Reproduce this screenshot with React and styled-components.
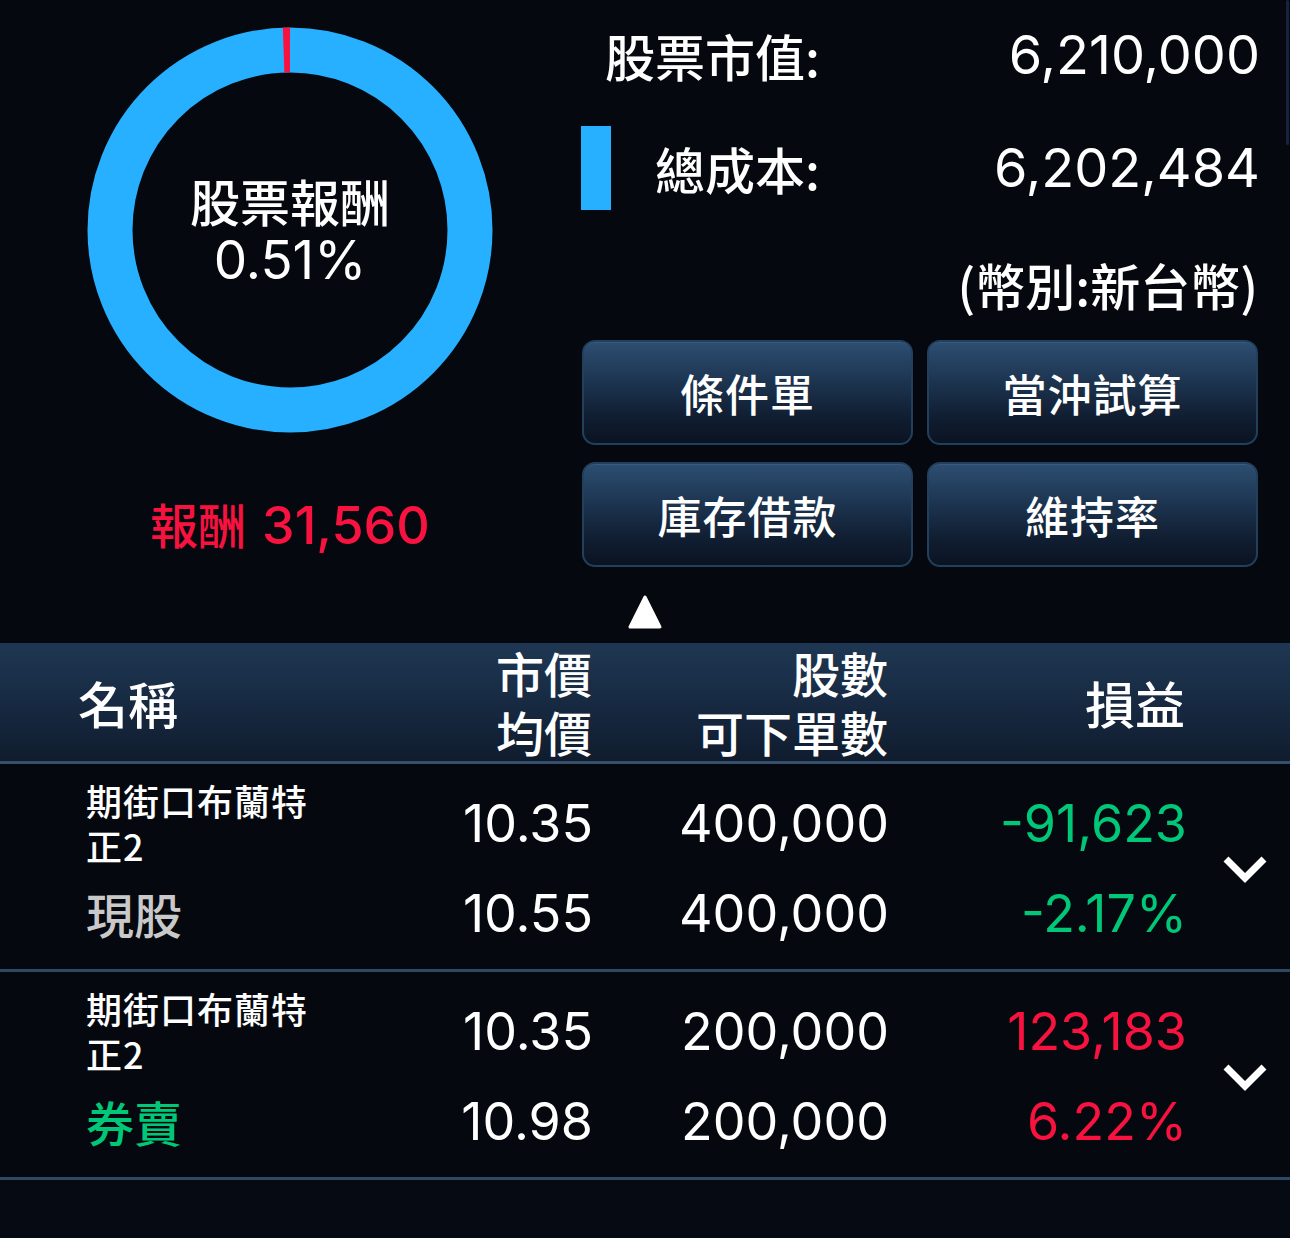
import React from "react";
import styled, { createGlobalStyle } from "styled-components";

const GlobalStyle = createGlobalStyle`
  html, body { margin: 0; padding: 0; background: #05080e; }
  body {
    font-family: Inter, "Noto Sans CJK TC", sans-serif;
    color: #ffffff;
    -webkit-font-smoothing: antialiased;
  }
  * { box-sizing: border-box; }
`;

const RED = "#f8123f";
const GREEN = "#00c878";
const BLUE = "#27b0ff";
const COLS = "420px 173px 296px 298px 1fr";

const Page = styled.div`
  position: relative;
  width: 1290px;
  min-height: 1238px;
  display: flex;
  flex-direction: column;
  background: #05080e;
  overflow: hidden;
`;

const ScrollIndicator = styled.div`
  position: absolute;
  top: 0;
  right: 1px;
  width: 3px;
  height: 145px;
  border-radius: 2px;
  background: rgba(38, 58, 98, 0.55);
`;

const Top = styled.section`
  display: flex;
  align-items: flex-start;
`;

const LeftCol = styled.div`
  width: 580px;
  display: flex;
  flex-direction: column;
  align-items: center;
  padding-top: 27px;
`;

const Donut = styled.div`
  position: relative;
  width: 406px;
  height: 406px;
`;

const DonutLabel = styled.div`
  position: absolute;
  inset: 0;
  display: flex;
  flex-direction: column;
  align-items: center;
  justify-content: center;
`;

const DonutTitle = styled.div`
  font-family: "Noto Sans CJK TC", sans-serif;
  font-size: 50px;
  font-weight: 500;
  line-height: 60px;
`;

const DonutValue = styled.div`
  font-size: 53px;
  font-weight: 400;
  line-height: 60px;
`;

const Reward = styled.div`
  margin-top: 60px;
  line-height: 60px;
  color: ${RED};
  white-space: nowrap;
`;

const RewardLabel = styled.span`
  font-family: "Noto Sans CJK TC", sans-serif;
  font-size: 48px;
  font-weight: 500;
  margin-right: 16px;
`;

const RewardValue = styled.span`
  font-size: 52px;
  font-weight: 500;
`;

const RightCol = styled.div`
  flex: 1;
  padding: 25px 30px 0 0;
  display: flex;
  flex-direction: column;
`;

const InfoRow = styled.div`
  display: grid;
  grid-template-columns: 32px 208px 1fr;
  align-items: center;
  height: ${(p) => p.$h}px;
  margin-top: ${(p) => p.$mt || 0}px;
`;

const LegendBar = styled.div`
  width: 30px;
  height: 84px;
  margin-left: 1px;
  background: ${BLUE};
`;

const InfoLabel = styled.div`
  grid-column: 2;
  justify-self: end;
  width: max-content;
  font-family: "Noto Sans CJK TC", sans-serif;
  font-size: 50px;
  font-weight: 500;
  line-height: 60px;
  text-align: right;
  white-space: nowrap;
`;

const InfoValue = styled.div`
  grid-column: 3;
  font-size: 54px;
  font-weight: 400;
  line-height: 60px;
  text-align: right;
  white-space: nowrap;
`;

const Currency = styled.div`
  margin-top: 44px;
  padding-right: 2px;
  font-family: "Noto Sans CJK TC", sans-serif;
  font-size: 50px;
  font-weight: 500;
  line-height: 60px;
  text-align: right;
`;

const ButtonGrid = styled.div`
  margin-top: 26px;
  padding: 0 2px 0 2px;
  display: grid;
  grid-template-columns: 1fr 1fr;
  grid-auto-rows: 105px;
  gap: 17px 14px;
`;

const ActionButton = styled.button`
  display: flex;
  align-items: center;
  justify-content: center;
  border: 2px solid #21405e;
  border-radius: 13px;
  background: linear-gradient(
    to bottom,
    #2d4e71 0%,
    #1d3551 38%,
    #111f33 72%,
    #0b1321 100%
  );
  box-shadow: inset 0 1px 0 rgba(90, 130, 170, 0.25);
  color: #ffffff;
  font-family: "Noto Sans CJK TC", sans-serif;
  font-size: 44px;
  font-weight: 500;
  letter-spacing: 1px;
  cursor: pointer;
  padding: 0;
`;

const ArrowRow = styled.div`
  height: 75px;
  padding-top: 26px;
  display: flex;
  justify-content: center;
`;

const Header = styled.div`
  display: grid;
  grid-template-columns: ${COLS};
  height: 121px;
  background: linear-gradient(to bottom, #1f3753 0%, #172a42 50%, #101c2e 100%);
  border-bottom: 3px solid #34506a;
`;

const HeaderCell = styled.div`
  display: flex;
  flex-direction: column;
  justify-content: center;
  align-items: ${(p) => (p.$left ? "flex-start" : "flex-end")};
  padding-left: ${(p) => (p.$left ? "78px" : "0")};
  padding-right: ${(p) => p.$pr || 0}px;
  font-family: "Noto Sans CJK TC", sans-serif;
  font-size: ${(p) => p.$size || 48}px;
  font-weight: 500;
  line-height: 59px;
  white-space: nowrap;
`;

const Row = styled.div`
  display: grid;
  grid-template-columns: ${COLS};
  grid-template-rows: 90px 90px;
  padding: 14px 0 11px;
  border-bottom: 3px solid #2f4962;
`;

const NameCell = styled.div`
  grid-column: 1;
  grid-row: 1;
  padding-left: 86px;
  display: flex;
  align-items: center;
`;

const NameText = styled.div`
  max-width: 240px;
  font-family: "Noto Sans CJK TC", sans-serif;
  font-size: 36px;
  font-weight: 500;
  line-height: 45px;
  letter-spacing: 1px;
`;

const TypeCell = styled.div`
  grid-column: 1;
  grid-row: 2;
  padding-left: 86px;
  display: flex;
  align-items: center;
  font-family: "Noto Sans CJK TC", sans-serif;
  font-size: 48px;
  font-weight: 500;
  color: ${(p) => p.$color};
`;

const Num = styled.div`
  grid-column: ${(p) => p.$col};
  grid-row: ${(p) => p.$row};
  display: flex;
  align-items: center;
  justify-content: flex-end;
  font-size: 52px;
  font-weight: 400;
  color: ${(p) => p.$color || "#ffffff"};
  white-space: nowrap;
`;

const ChevronCell = styled.div`
  grid-column: 5;
  grid-row: 1 / 3;
  display: flex;
  align-items: center;
  justify-content: flex-end;
  padding-right: 22px;
  padding-top: 2px;
`;

const Filler = styled.div`
  flex: 1;
  background: #060a13;
`;

function DonutChart() {
  return (
    <svg width="406" height="406" viewBox="0 0 406 406">
      <circle cx="203" cy="203" r="180" fill="none" stroke={BLUE} strokeWidth="45" />
      <path
        d="M 196.6 23.1 A 180 180 0 0 1 203 23"
        fill="none"
        stroke={RED}
        strokeWidth="45"
      />
    </svg>
  );
}

function Triangle() {
  return (
    <svg width="36" height="36" viewBox="0 0 36 36">
      <polygon
        points="18,3 33,33 3,33"
        fill="#ffffff"
        stroke="#ffffff"
        strokeWidth="3"
        strokeLinejoin="round"
      />
    </svg>
  );
}

function Chevron() {
  return (
    <svg width="46" height="30" viewBox="0 0 46 30">
      <polyline
        points="4,5 23,24 42,5"
        fill="none"
        stroke="#ffffff"
        strokeWidth="7"
        strokeLinejoin="miter"
      />
    </svg>
  );
}

const rows = [
  {
    name: "期街口布蘭特正2",
    type: "現股",
    typeColor: "#c9c9c9",
    price: "10.35",
    avg: "10.55",
    qty: "400,000",
    avail: "400,000",
    pl: "-91,623",
    pct: "-2.17%",
    plColor: GREEN,
  },
  {
    name: "期街口布蘭特正2",
    type: "券賣",
    typeColor: GREEN,
    price: "10.35",
    avg: "10.98",
    qty: "200,000",
    avail: "200,000",
    pl: "123,183",
    pct: "6.22%",
    plColor: RED,
  },
];

export default function App() {
  return (
    <>
      <GlobalStyle />
      <Page>
        <ScrollIndicator />
        <Top>
          <LeftCol>
            <Donut>
              <DonutChart />
              <DonutLabel>
                <DonutTitle>股票報酬</DonutTitle>
                <DonutValue>0.51%</DonutValue>
              </DonutLabel>
            </Donut>
            <Reward>
              <RewardLabel>報酬</RewardLabel>
              <RewardValue>31,560</RewardValue>
            </Reward>
          </LeftCol>
          <RightCol>
            <InfoRow $h={60}>
              <InfoLabel>股票市值:</InfoLabel>
              <InfoValue>6,210,000</InfoValue>
            </InfoRow>
            <InfoRow $h={84} $mt={41}>
              <LegendBar />
              <InfoLabel>總成本:</InfoLabel>
              <InfoValue>6,202,484</InfoValue>
            </InfoRow>
            <Currency>(幣別:新台幣)</Currency>
            <ButtonGrid>
              <ActionButton>條件單</ActionButton>
              <ActionButton>當沖試算</ActionButton>
              <ActionButton>庫存借款</ActionButton>
              <ActionButton>維持率</ActionButton>
            </ButtonGrid>
          </RightCol>
        </Top>
        <ArrowRow>
          <Triangle />
        </ArrowRow>
        <Header>
          <HeaderCell $left $size={50}>名稱</HeaderCell>
          <HeaderCell $pr={1}>
            <span>市價</span>
            <span>均價</span>
          </HeaderCell>
          <HeaderCell $pr={1}>
            <span>股數</span>
            <span>可下單數</span>
          </HeaderCell>
          <HeaderCell $size={50} $pr={2}>損益</HeaderCell>
          <span />
        </Header>
        {rows.map((r, i) => (
          <Row key={i}>
            <NameCell>
              <NameText>{r.name}</NameText>
            </NameCell>
            <TypeCell $color={r.typeColor}>{r.type}</TypeCell>
            <Num $col={2} $row={1}>{r.price}</Num>
            <Num $col={2} $row={2}>{r.avg}</Num>
            <Num $col={3} $row={1}>{r.qty}</Num>
            <Num $col={3} $row={2}>{r.avail}</Num>
            <Num $col={4} $row={1} $color={r.plColor}>{r.pl}</Num>
            <Num $col={4} $row={2} $color={r.plColor}>{r.pct}</Num>
            <ChevronCell>
              <Chevron />
            </ChevronCell>
          </Row>
        ))}
        <Filler />
      </Page>
    </>
  );
}
